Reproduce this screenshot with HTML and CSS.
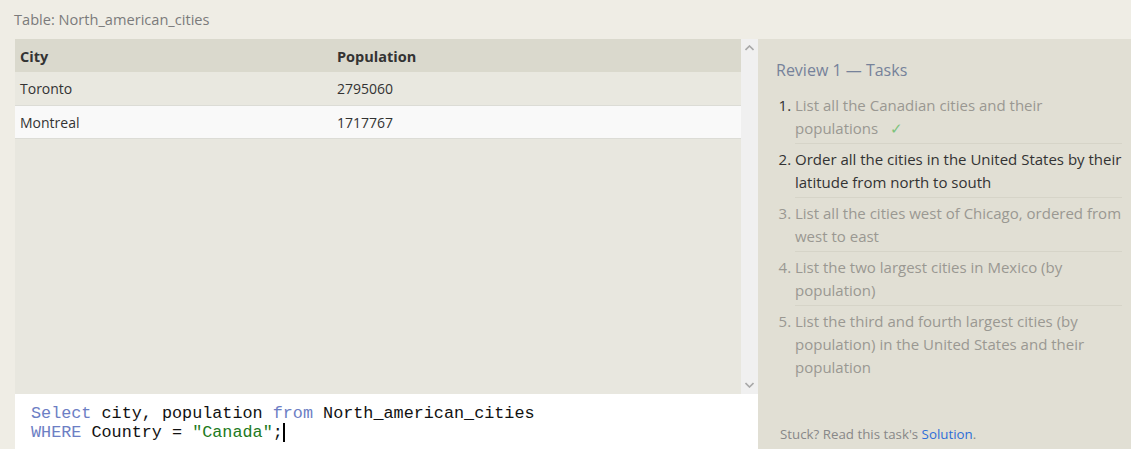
FILE: index.html
```html
<!DOCTYPE html>
<html>
<head>
<meta charset="utf-8">
<link rel="stylesheet" href="styles.css">
</head>
<body>
<div class="page">
  <div class="table-title">Table: North_american_cities</div>
  <div class="main">
    <div class="left">
      <div class="results">
        <div class="table-area">
          <table class="data">
            <thead>
              <tr><th class="col-city">City</th><th>Population</th></tr>
            </thead>
            <tbody>
              <tr class="odd"><td>Toronto</td><td>2795060</td></tr>
              <tr class="even"><td>Montreal</td><td>1717767</td></tr>
            </tbody>
          </table>
        </div>
        <div class="scrollbar">
          <svg class="arrow" width="9" height="6" viewBox="0 0 9 6"><path d="M0.5 5 L4.5 1 L8.5 5" fill="none" stroke="#a8a8a8" stroke-width="1.6"/></svg>
          <svg class="arrow" width="9" height="6" viewBox="0 0 9 6"><path d="M0.5 1 L4.5 5 L8.5 1" fill="none" stroke="#a8a8a8" stroke-width="1.6"/></svg>
        </div>
      </div>
      <div class="editor">
        <div class="code-line"><span class="kw">Select</span> city, population <span class="kw">from</span> North_american_cities</div>
        <div class="code-line"><span class="kw">WHERE</span> Country = <span class="str">"Canada"</span>;<span class="caret"></span></div>
      </div>
    </div>
    <div class="right">
      <div class="review-title">Review 1 — Tasks</div>
      <ol class="tasks">
        <li class="done">List all the Canadian cities and their populations <span class="check">✓</span></li>
        <li class="current">Order all the cities in the United States by their latitude from north to south</li>
        <li>List all the cities west of Chicago, ordered from west to east</li>
        <li>List the two largest cities in Mexico (by population)</li>
        <li class="last">List the third and fourth largest cities (by population) in the United States and their population</li>
      </ol>
      <div class="stuck">Stuck? Read this task's <span class="link">Solution</span>.</div>
    </div>
  </div>
</div>
</body>
</html>
```

FILE: styles.css
```css
html, body {
  margin: 0;
  padding: 0;
}
body {
  background: #efede5;
  font-family: "Open Sans", "Noto Sans", sans-serif;
  width: 1131px;
  height: 449px;
  overflow: hidden;
}
.page {
  display: flex;
  flex-direction: column;
  height: 449px;
}
.table-title {
  height: 39px;
  box-sizing: border-box;
  padding: 9px 0 0 14px;
  font-size: 14.6px;
  color: #7b7b7b;
  line-height: 20px;
}
.main {
  display: flex;
  flex: 1;
  min-height: 0;
}
.left {
  width: 743px;
  margin-left: 15px;
  display: flex;
  flex-direction: column;
}
.results {
  height: 355px;
  display: flex;
}
.table-area {
  flex: 1;
  background: #e8e7df;
}
.data {
  width: 100%;
  border-collapse: collapse;
  font-size: 14px;
  color: #333;
}
.data th {
  text-align: left;
  font-weight: 700;
  background: #dad9cd;
  height: 33px;
  padding: 2px 5px 0;
  box-sizing: border-box;
  color: #333;
  font-size: 14.5px;
}
.data th.col-city {
  width: 317px;
}
.data td {
  height: 33px;
  padding: 1px 5px 0;
  border-bottom: 1px solid #dcdcd6;
  box-sizing: border-box;
}
.data tr.odd td {
  background: #e9e8e0;
}
.data tr.even td {
  background: #f9f9f9;
}
.scrollbar {
  width: 17px;
  background: #f0f0f0;
  display: flex;
  flex-direction: column;
  justify-content: space-between;
  align-items: center;
  padding: 6px 0 6px;
  box-sizing: border-box;
}
.arrow {
  display: block;
}
.editor {
  flex: 1;
  background: #ffffff;
  padding: 10px 0 0 16px;
  font-family: "Liberation Mono", "Courier New", monospace;
  font-size: 16.8px;
  line-height: 19px;
  color: #111;
}
.code-line {
  white-space: pre;
}
.kw {
  color: #6c7ec4;
}
.str {
  color: #1d7a1d;
}
.caret {
  display: inline-block;
  width: 2px;
  height: 19px;
  background: #000;
  vertical-align: top;
}
.right {
  flex: 1;
  background: #e1dfd4;
  display: flex;
  flex-direction: column;
  padding: 20px 9px 0 18px;
  box-sizing: border-box;
}
.review-title {
  font-size: 16px;
  line-height: 22px;
  color: #76829a;
}
.tasks {
  margin: 9px 0 0 0;
  padding: 0 0 0 19px;
  font-size: 15px;
  line-height: 23px;
  color: #9a9892;
}
.tasks li {
  padding: 4px 0 3px;
  border-bottom: 1px solid #d6d4c8;
}
.tasks li.done {
  color: #9a9892;
}
.tasks li.done::marker {
  color: #333;
}
.tasks li.current {
  color: #333;
}
.tasks li.last {
  border-bottom: none;
}
.check {
  display: inline-block;
  line-height: 16px;
  color: #7cc37c;
  margin-left: 8px;
}
.stuck {
  margin-top: auto;
  padding: 0 0 6px 4px;
  font-size: 13.3px;
  line-height: 18px;
  color: #888;
}
.link {
  color: #2e6ed8;
}
```
